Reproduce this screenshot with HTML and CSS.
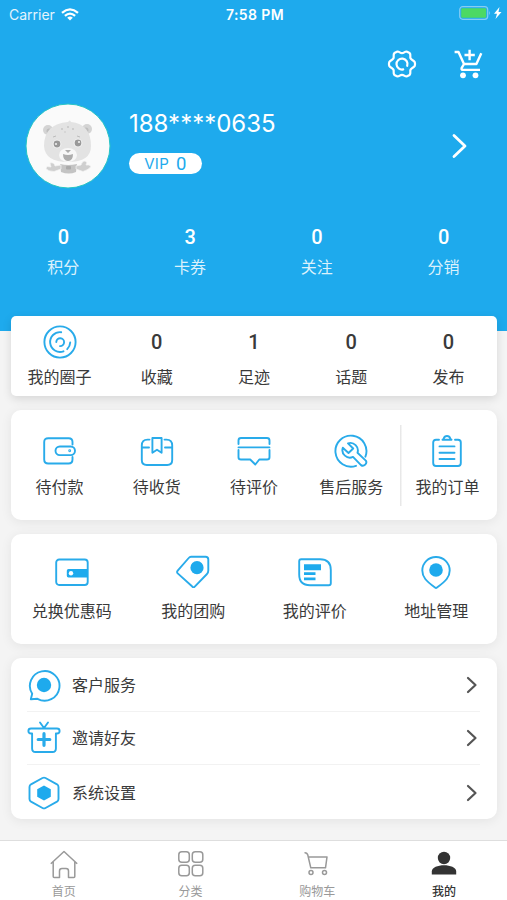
FILE: index.html
```html
<!DOCTYPE html>
<html lang="zh-CN">
<head>
<meta charset="utf-8">
<title>我的</title>
<link rel="stylesheet" href="styles.css">
</head>
<body>
<div class="app">
  <header class="hero">
    <div class="status">
      <div class="carrier"><span>Carrier</span>
        <svg width="18" height="13" viewBox="0 0 18 13" fill="none" stroke="#fff" stroke-width="2.3"><path d="M1 4.8Q9-2 17 4.8M3.9 7.9Q9 3.4 14.1 7.9"/><path d="M6.2 9.7Q9 7.4 11.8 9.7L9 12.6Z" fill="#fff" stroke="none"/></svg>
      </div>
      <div class="clock">7:58 PM</div>
      <div class="power">
        <svg width="43" height="14" viewBox="0 0 43 14"><rect x=".7" y=".7" width="28" height="12.6" rx="3" fill="none" stroke="#86cdf4" stroke-width="1.2"/><rect x="2.2" y="2.2" width="25" height="9.6" rx="1.2" fill="#4cd964"/><path d="M30.2 4.8q1.8 2.2 0 4.4z" fill="#86cdf4"/><path d="M40.500 1L35 7.800h3L36.500 13l6-7.100h-3z" fill="#fff"/></svg>
      </div>
    </div>
    <div class="tools">
      <svg width="34" height="34" viewBox="0 0 34 34" fill="none" stroke="#fff" stroke-width="2.2" stroke-linecap="round" stroke-linejoin="round"><path d="M12.500 4.500C14.500 4.500 15 6.200 17 6.200S19.500 4.500 21.500 4.500L24.600 6.100C26.300 7.800 24.600 9.600 25.600 11.400S29 13.400 29.800 15.300Q30.300 17 29.800 18.700C29 20.600 26.600 20.800 25.600 22.600S26.300 26.200 24.600 27.900L21.500 29.500C19.500 29.500 19 27.800 17 27.800S14.500 29.500 12.500 29.500L9.400 27.900C7.700 26.200 9.400 24.400 8.400 22.600S5 20.600 4.200 18.700Q3.700 17 4.200 15.300C5 13.400 7.400 13.200 8.400 11.400S7.700 7.800 9.400 6.100Z"/><path d="M18.200 22.400A5.500 5.500 0 1 1 22.200 18.800"/></svg>
      <svg width="34" height="34" viewBox="0 0 34 34" fill="none" stroke="#fff" stroke-width="2.400" stroke-linejoin="round"><path d="M2.600 5H6.500L12 17H24.400L29.300 6.300M12 17L9.600 21.200Q9.200 22.900 11 22.900H28M17.600 2.800V13.200M12.500 8H22.800"/><circle cx="11" cy="28.300" r="2.900" fill="#fff" stroke="none"/><circle cx="23.500" cy="28.300" r="2.900" fill="#fff" stroke="none"/></svg>
    </div>
    <div class="profile">
      <svg class="avatar" width="86" height="86" viewBox="0 0 86 86"><circle cx="43" cy="43" r="42" fill="#fafafa" stroke="#27c5c5" stroke-width="1"/><circle cx="23" cy="27" r="5" fill="#d4d4d4"/><circle cx="62" cy="26" r="5" fill="#d4d4d4"/><circle cx="24" cy="28" r="2.500" fill="#bdbdbd"/><circle cx="61" cy="27" r="2.500" fill="#bdbdbd"/><path d="M43 19Q45 16 46 19Q66 21 66 43Q66 59 43 59T19 43Q19 21 43 19Z" fill="#e3e3e3"/><g fill="#c6c6c6"><circle cx="37" cy="26" r="1"/><circle cx="43" cy="24" r="1"/><circle cx="48" cy="26" r="1"/><circle cx="40" cy="29" r=".8"/></g><ellipse cx="43" cy="52" rx="9" ry="7" fill="#f7f7f7"/><path d="M40 47h6l-3 3zM38 51q5 2 10 0q0 7-5 7t-5-7" fill="#adadad"/><circle cx="32" cy="41" r="4.300" fill="#f8f8f8"/><circle cx="53" cy="40" r="4.300" fill="#f8f8f8"/><circle cx="32" cy="41" r="3.400" fill="#999"/><circle cx="53" cy="40" r="3.400" fill="#999"/><circle cx="31" cy="41" r="1.100" fill="#eee"/><circle cx="54" cy="39" r="1.100" fill="#eee"/><path d="M28 34l3-1M52 33l3 1" stroke="#bbb"/><path d="M35 61q8 2 17 0l-1 8q-7 3-15 0z" fill="#c4c4c4"/><path d="M36 66l-7 2.500q-6 0-8-3l1-2 4 .500-1-4q4-1 5 3l6-1zM51 66l7 2.500q6-2 8-5l-2-1.500h-3q2-3-1-4-3 0-4 4l-5 1z" fill="#cfcfcf" stroke="#f4f4f4" stroke-width=".7"/><rect x="41" y="63" width="5" height="3.500" rx="1" fill="#aaa"/></svg>
      <div class="identity">
        <div class="phone">188****0635</div>
        <div class="vip">VIP <span>0</span></div>
      </div>
      <svg class="go" width="18" height="28" viewBox="0 0 18 28" fill="none" stroke="#fff" stroke-width="2.800" stroke-linecap="round" stroke-linejoin="round"><path d="M3 3.500L14 14L3 24.500"/></svg>
    </div>
    <div class="stats">
      <div><b>0</b><span>积分</span></div>
      <div><b>3</b><span>卡券</span></div>
      <div><b>0</b><span>关注</span></div>
      <div><b>0</b><span>分销</span></div>
    </div>
  </header>

  <main>
    <section class="card circle">
      <div><svg class="ico" viewBox="0 0 34 34"><circle cx="17" cy="17" r="15.600"/><path d="M18.200 7.200A9.900 9.900 0 1 0 20.500 26.300M24.200 24.200A10.200 10.200 0 0 0 27.200 17.500"/><path d="M13.300 17A3.900 3.900 0 1 1 17 21.100"/></svg><span>我的圈子</span></div>
      <div><b>0</b><span>收藏</span></div>
      <div><b>1</b><span>足迹</span></div>
      <div><b>0</b><span>话题</span></div>
      <div><b>0</b><span>发布</span></div>
    </section>

    <section class="card orders">
      <div><svg class="ico" viewBox="0 0 34 34"><path d="M29.500 10.500V8Q29.500 4.200 25.700 4.200H5.200Q1.200 4.200 1.200 8V25.500Q1.200 29.500 5.200 29.500H25.500Q29.500 29.500 29.500 25.500V23"/><rect x="12.500" y="12.500" width="19.500" height="8.600" rx="4.300"/><circle cx="26.700" cy="16.800" r=".5"/></svg><span>待付款</span></div>
      <div><svg class="ico" viewBox="0 0 34 34"><path d="M9.500 5.600H7.500Q1.800 5.600 1.800 11.500V26Q1.800 31 6.800 31H27.200Q32.200 31 32.200 26V11.500Q32.200 5.600 26.500 5.600H24.500M1.800 13.500H9M25 13.500H32M12.400 4H21.600V18.700L17 15.700L12.400 18.700Z"/></svg><span>待收货</span></div>
      <div><svg class="ico" viewBox="0 0 34 34"><path d="M1.500 10V6.500Q1.500 4 4 4H30Q32.500 4 32.500 6.500V10M1.500 13.400H32.500M1.500 16V23.200Q1.500 25.500 4 25.500H13.200L18.300 30.500L22.300 25.500H30Q32.500 25.500 32.500 23.200V16"/></svg><span>待评价</span></div>
      <div><svg class="ico" viewBox="0 0 34 34"><path d="M22 31.800A15.500 15.500 0 1 1 31.400 22.700M14 9.300A7.500 7.500 0 0 1 23.500 18.700L31.800 26.600Q33.200 28.600 31.200 30.600T27 31.100L19 22.900A7.500 7.500 0 0 1 8.800 13.700L14.500 19L19.200 14.500Z"/></svg><span>售后服务</span></div>
      <div class="all"><svg class="ico" viewBox="0 0 34 34"><path d="M9 5.700H6Q3.200 5.700 3.200 8.500V29Q3.200 32 6 32H28Q30.800 32 30.800 29V8.500Q30.800 5.700 28 5.700H25M12.500 5.700Q13.500 5.500 13.700 4.500Q14.500 2 17 2T20.300 4.500Q20.500 5.500 21.500 5.700ZM9.500 12.400H24.500M9.500 18.700H24.500M9.500 25H24.500"/></svg><span>我的订单</span></div>
    </section>

    <section class="card assets">
      <div><svg class="ico" viewBox="0 0 34 34"><rect x="1.200" y="4.500" width="31.500" height="25.500" rx="3"/><path class="solid" d="M13.500 14h19.500v8.500H13.500q-1.700 0-1.700-1.700v-5.100q0-1.700 1.700-1.700z"/><circle cx="16" cy="18.300" r="2.200" fill="#fff" stroke="none"/></svg><span>兑换优惠码</span></div>
      <div><svg class="ico" viewBox="0 0 34 34"><path d="M15 1.800H29.500Q32.300 1.800 32.300 4.600V15.500Q32.300 17.500 31 19L19 31.300Q17.500 33 16 31.300L1.700 18.400Q.5 17 1.700 15.600L12.700 3Q13.700 1.800 15 1.800Z"/><circle class="solid" cx="21" cy="12.700" r="6.600"/></svg><span>我的团购</span></div>
      <div><svg class="ico" viewBox="0 0 34 34"><path d="M3.200 4.200H22Q32.800 4.200 32.800 15V28.200Q32.800 30.200 30.800 30.200H12Q1.200 30.200 1.200 19.500V6.200Q1.200 4.200 3.200 4.200Z"/><path class="solid" d="M6 9.200H23V15.200H6zM6 17.300h11.500v2.700H6zM6 22.500h11.500v2.700H6z"/></svg><span>我的评价</span></div>
      <div><svg class="ico" viewBox="0 0 34 34"><path d="M17 2A13.600 13.600 0 0 1 30.700 15.500C30.700 22 27 26 18 32.500Q17 33.300 16 32.500C7 26 3.300 22 3.300 15.500A13.600 13.600 0 0 1 17 2Z"/><circle class="solid" cx="17" cy="15" r="6.800"/></svg><span>地址管理</span></div>
    </section>

    <section class="card menu">
      <div class="row"><svg class="ico" viewBox="0 0 34 34"><path d="M5.200 25.800A14.800 14.800 0 1 1 10.500 30.800L3.800 31.300Z"/><circle class="solid" cx="17" cy="17" r="7.200"/></svg><span>客户服务</span><svg class="arrow" viewBox="0 0 12 18"><path d="M2 2L9.500 9L2 16"/></svg></div>
      <div class="row"><svg class="ico" viewBox="0 0 34 34"><path d="M4 7.500H30Q32.600 7.500 32.600 10T30 12.500H28.900V27.500Q28.900 31 25.500 31H8.500Q5.100 31 5.100 27.500V12.500H4Q1.400 12.500 1.400 10T4 7.500ZM13 1.500L17 7L21 1.500"/><path class="plus" d="M17 12.700V24.300M11.200 18.500H22.800"/></svg><span>邀请好友</span><svg class="arrow" viewBox="0 0 12 18"><path d="M2 2L9.500 9L2 16"/></svg></div>
      <div class="row"><svg class="ico" viewBox="0 0 34 34"><path d="M15.500 2Q17 1.200 18.500 2L30 8.300Q31.500 9.200 31.500 11V23Q31.500 24.800 30 25.700L18.500 32Q17 32.800 15.500 32L4 25.700Q2.500 24.800 2.500 23V11Q2.500 9.200 4 8.300Z"/><path class="solid" d="M17 9.500L23.800 13.300V20.700L17 24.500L10.200 20.700V13.300Z"/></svg><span>系统设置</span><svg class="arrow" viewBox="0 0 12 18"><path d="M2 2L9.500 9L2 16"/></svg></div>
    </section>
  </main>

  <nav class="tabs">
    <div><svg viewBox="0 0 30 30"><path d="M1.800 14.800L15 2.500L28.200 14.800M4.200 13V27.500Q4.200 28.500 5.200 28.500H10.500V22Q10.500 19.500 13 19.500H17Q19.500 19.500 19.500 22V28.500H24.800Q25.800 28.500 25.800 27.500V13"/></svg><span>首页</span></div>
    <div><svg viewBox="0 0 30 30"><rect x="2.800" y="2.800" width="10.500" height="10.500" rx="3"/><rect x="16.300" y="2.800" width="10.500" height="10.500" rx="3"/><rect x="2.800" y="16.300" width="10.500" height="10.500" rx="3"/><rect x="16.300" y="16.300" width="10.500" height="10.500" rx="3"/></svg><span>分类</span></div>
    <div><svg viewBox="0 0 30 30"><path d="M2.500 3.700Q5.200 3.500 5.800 6L8.800 18.800H23.500L25 8H6.500"/><circle cx="9" cy="23.500" r="2"/><circle cx="22.500" cy="23.500" r="2"/></svg><span>购物车</span></div>
    <div class="active"><svg viewBox="0 0 30 30"><circle cx="15" cy="9" r="6.200"/><path d="M2.800 25.500V22.500C2.800 14.200 27.200 14.200 27.200 22.500V25.500Z"/></svg><span>我的</span></div>
  </nav>
</div>
</body>
</html>
```
FILE: styles.css
```css
* { box-sizing: border-box; }
body {
  margin: 0;
  background: #f4f4f4;
  color: #3a3a3a;
  font-family: Inter, "Noto Sans CJK SC", sans-serif;
}
svg { display: block; flex: none; }
b { font-family: Roboto, sans-serif; font-weight: 500; }
.app { width: 507px; height: 900px; display: flex; flex-direction: column; overflow: hidden; }

.hero { height: 331px; flex: none; background: #1eaaed; color: #fff; }
.status { height: 28px; padding: 0 6px 0 9px; display: grid; grid-template-columns: 1fr auto 1fr; align-items: center; font-size: 14px; }
.carrier { display: flex; align-items: center; gap: 6px; color: #e4f4fd; }
.clock { font-weight: 600; letter-spacing: .4px; }
.power { display: flex; justify-content: flex-end; }
.power svg { margin-right: -1px; position: relative; top: -1px; }
.tools { height: 72px; padding: 0 21px 0 0; display: flex; justify-content: flex-end; align-items: center; gap: 33px; }
.profile { height: 92px; padding: 0 38px 0 25px; display: flex; align-items: center; }
.identity { margin: -9px 0 0 18px; flex: 1; }
.phone { font-size: 24px; line-height: 28px; white-space: nowrap; }
.vip { width: 73px; height: 21px; margin-top: 15px; border-radius: 11px; background: #fff; color: #1eaaed; font-size: 15px; line-height: 21px; display: flex; justify-content: center; gap: 7px; letter-spacing: .3px; }
.vip span { font-family: Roboto, sans-serif; font-size: 18.500px; line-height: 22px; }
.stats { display: grid; grid-template-columns: repeat(4, 1fr); padding-top: 31px; text-align: center; }
.stats div, .card > div:not(.row) { display: flex; flex-direction: column; align-items: center; }
.stats b { font-size: 20px; line-height: 28px; }
.stats span { font-size: 16px; line-height: 24px; margin-top: 4px; color: #dbf1fc; }

main { flex: 1; display: flex; flex-direction: column; gap: 14px; padding: 0 10px 0 11px; margin-top: -15px; }
.card { background: #fff; border-radius: 10px; box-shadow: 0 2px 12px rgba(0, 0, 0, .07); display: grid; flex: none; font-size: 16px; line-height: 24px; }
.ico { width: 34px; height: 34px; fill: none; stroke: #29abea; stroke-width: 1.900; stroke-linecap: round; stroke-linejoin: round; }
.ico .solid { fill: #1eaaed; stroke: none; }
.ico .plus { stroke-width: 3.200; }
.circle { height: 80px; border-radius: 5px; grid-template-columns: repeat(5, 1fr); padding-top: 9px; box-shadow: 0 3px 10px rgba(0, 0, 0, .12); }
.circle b { font-size: 20px; line-height: 34px; }
.circle span { margin-top: 6px; }
.orders { height: 110px; grid-template-columns: repeat(5, 1fr); }
.orders > div { padding-top: 24px; }
.orders span { margin-top: 7px; }
.orders .all { background: linear-gradient(#e8e8e8, #e8e8e8) 0 15px / 1.500px 81px no-repeat; }
.orders .all svg, .orders .all span { position: relative; left: -1px; }
.assets { height: 110px; grid-template-columns: repeat(4, 1fr); }
.assets > div { padding-top: 21px; }
.assets span { margin-top: 10px; }
.menu { height: 161px; grid-template-rows: repeat(3, 1fr); padding: 0 17px 0 16px; }
.row { display: flex; align-items: center; border-bottom: 1px solid #f2f2f2; padding-top: 1px; }
.row:last-child { border-bottom: 0; }
.row span { margin-left: 11px; flex: 1; }
.arrow { width: 12px; height: 18px; margin-right: 2px; fill: none; stroke: #555; stroke-width: 2.200; stroke-linecap: round; stroke-linejoin: round; }

.tabs { height: 60px; flex: none; background: #fff; border-top: 1px solid #dedede; display: grid; grid-template-columns: repeat(4, 1fr); color: #999; font-size: 12px; line-height: 18px; }
.tabs div { display: flex; flex-direction: column; align-items: center; padding: 8px 0 0 1px; }
.tabs svg { width: 30px; height: 30px; fill: none; stroke: #999; stroke-width: 1.500; stroke-linejoin: round; }
.tabs span { margin-top: 4px; }
.tabs .active { color: #333; font-weight: 500; }
.tabs .active svg { fill: #333; stroke: none; }
```
